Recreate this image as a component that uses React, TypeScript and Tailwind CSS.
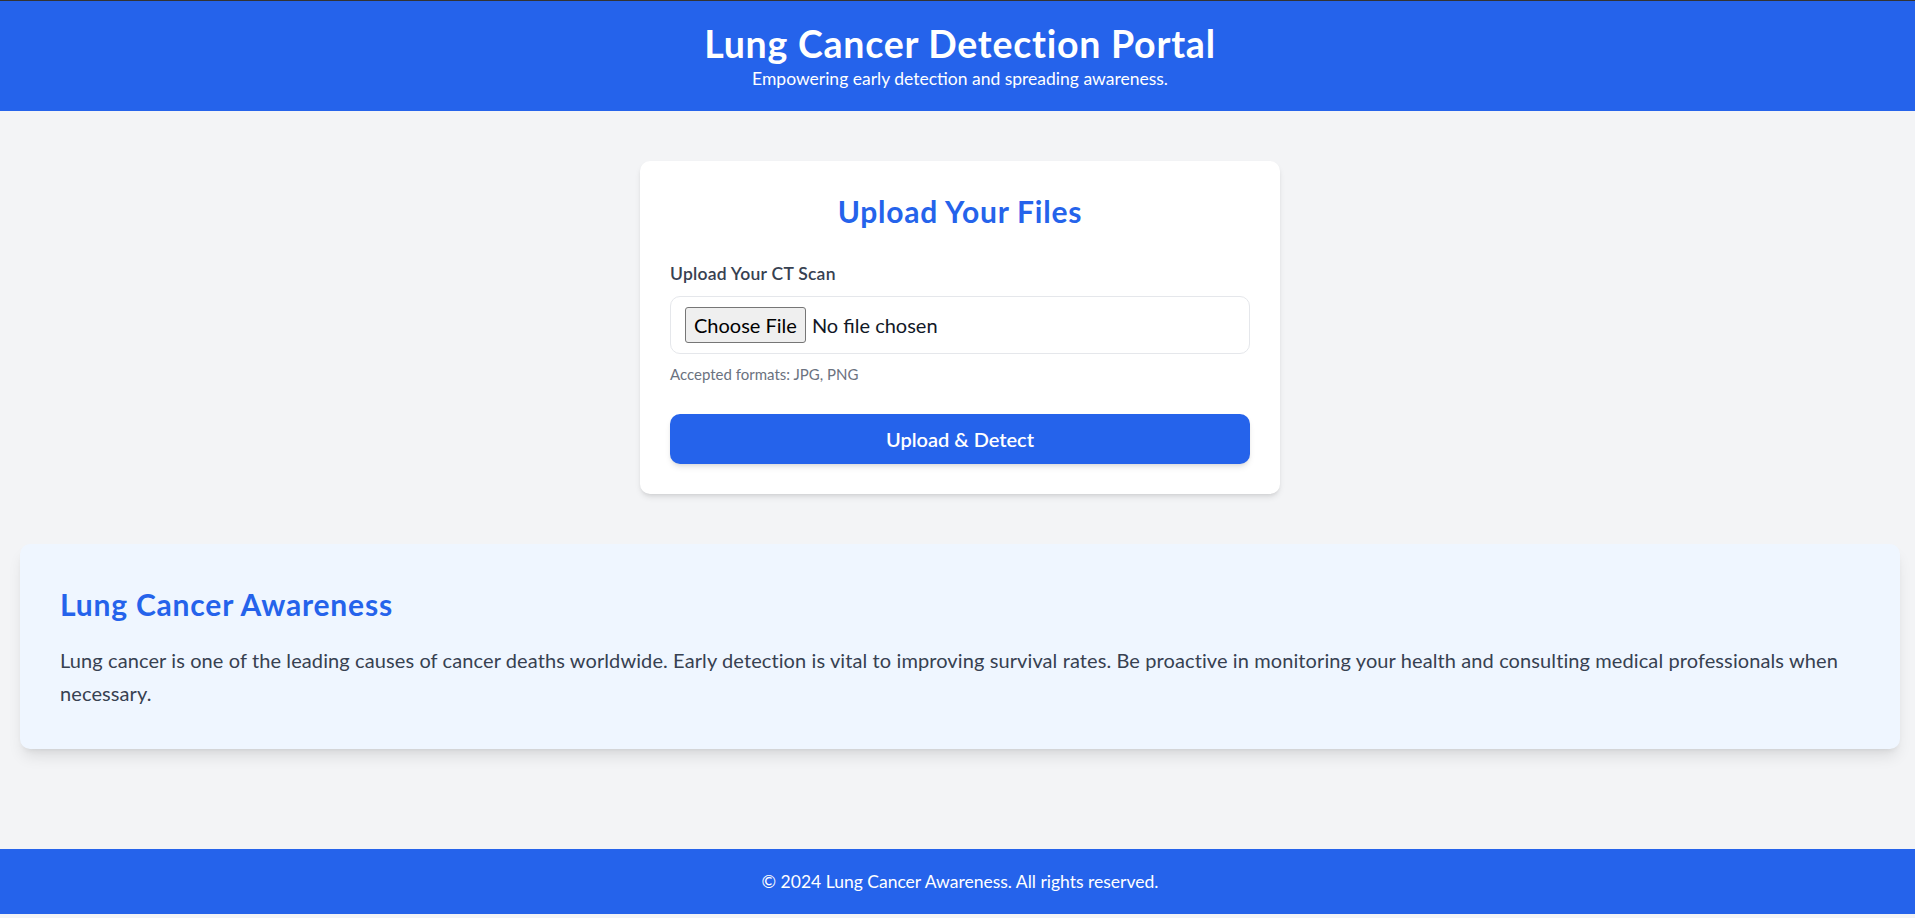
export default function App() {
  return (
    <div
      className="min-h-screen bg-[#f3f4f6] border-t border-[#333333] overflow-hidden"
      style={{ fontFamily: "Lato, 'Noto Sans', sans-serif" }}
    >
      <div className="w-[1920px] min-h-[917px] flex flex-col">
        {/* Header */}
        <header className="bg-[#2563eb] text-white text-center py-[20px]">
          <h1 className="text-[37.5px] leading-[45px] font-bold tracking-[0.75px]">
            Lung Cancer Detection Portal
          </h1>
          <p className="text-[17.5px] leading-[25px]">
            Empowering early detection and spreading awareness.
          </p>
        </header>

        <main className="pt-[50px]">
          {/* Upload card */}
          <div className="mx-auto w-[640px] bg-white rounded-[10px] shadow-md p-[30px]">
            <h2 className="text-[30px] leading-[40px] font-bold tracking-[0.8px] text-[#2563eb] text-center mb-[30px]">
              Upload Your Files
            </h2>
            <label
              htmlFor="ct-scan"
              className="block text-[17.5px] leading-[25px] font-semibold tracking-[0.25px] text-[#374151] mb-[10px]"
            >
              Upload Your CT Scan
            </label>
            <input
              id="ct-scan"
              type="file"
              accept=".jpg,.png"
              className="block w-full border border-[#e5e7eb] rounded-[10px] px-[14px] py-[10px] text-[20px] leading-[30px] text-[#111827] file:bg-[#efefef] file:border file:border-solid file:border-[#767676] file:rounded-[3px] file:px-[8px] file:py-[2px] file:mr-[6px] file:text-black"
            />
            <p className="mt-[10px] text-[15px] leading-[20px] text-[#6b7280]">
              Accepted formats: JPG, PNG
            </p>
            <button className="mt-[30px] w-full bg-[#2563eb] text-white font-semibold text-[20px] leading-[30px] py-[10px] rounded-[10px] shadow-md">
              Upload &amp; Detect
            </button>
          </div>

          {/* Awareness */}
          <section className="mt-[50px] mx-[20px] bg-[#eff6ff] rounded-[10px] shadow-lg p-[40px]">
            <h2 className="text-[30px] leading-[40px] font-bold tracking-[0.8px] text-[#2563eb] mb-[20px]">
              Lung Cancer Awareness
            </h2>
            <p className="text-[20px] leading-[32.5px] tracking-[0.1px] text-[#374151]">
              Lung cancer is one of the leading causes of cancer deaths worldwide. Early detection is
              vital to improving survival rates. Be proactive in monitoring your health and consulting
              medical professionals when necessary.
            </p>
          </section>
        </main>

        <footer className="mt-[100px] bg-[#2563eb] text-white text-center py-[20px] text-[17.5px] leading-[25px]">
          © 2024 Lung Cancer Awareness. All rights reserved.
        </footer>
      </div>
    </div>
  );
}
